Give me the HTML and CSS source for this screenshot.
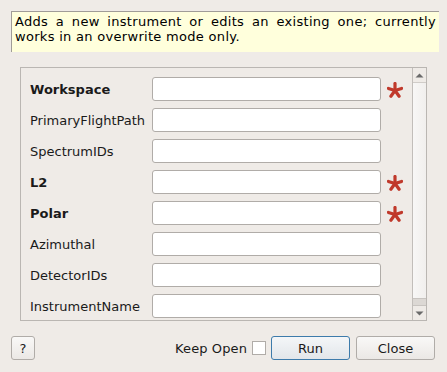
FILE: index.html
```html
<!DOCTYPE html>
<html>
<head>
<meta charset="utf-8">
<link rel="stylesheet" href="styles.css">
</head>
<body>
<div class="tip">Adds a new instrument or edits an existing one; currently works in an overwrite mode only.</div>
<div class="frame">
  <div class="rows">
    <div class="row"><span class="label bold">Workspace</span><div class="input"></div><svg class="star" viewBox="0 0 16 16"><g stroke="#c0392b" stroke-width="3.2" stroke-linecap="round"><line x1="8" y1="8.5" x2="8" y2="1.5"/><line x1="8" y1="8.5" x2="14.6" y2="6.4"/><line x1="8" y1="8.5" x2="12.1" y2="14.2"/><line x1="8" y1="8.5" x2="3.9" y2="14.2"/><line x1="8" y1="8.5" x2="1.4" y2="6.4"/></g></svg></div>
    <div class="row"><span class="label">PrimaryFlightPath</span><div class="input"></div></div>
    <div class="row"><span class="label">SpectrumIDs</span><div class="input"></div></div>
    <div class="row"><span class="label bold">L2</span><div class="input"></div><svg class="star" viewBox="0 0 16 16"><g stroke="#c0392b" stroke-width="3.2" stroke-linecap="round"><line x1="8" y1="8.5" x2="8" y2="1.5"/><line x1="8" y1="8.5" x2="14.6" y2="6.4"/><line x1="8" y1="8.5" x2="12.1" y2="14.2"/><line x1="8" y1="8.5" x2="3.9" y2="14.2"/><line x1="8" y1="8.5" x2="1.4" y2="6.4"/></g></svg></div>
    <div class="row"><span class="label bold">Polar</span><div class="input"></div><svg class="star" viewBox="0 0 16 16"><g stroke="#c0392b" stroke-width="3.2" stroke-linecap="round"><line x1="8" y1="8.5" x2="8" y2="1.5"/><line x1="8" y1="8.5" x2="14.6" y2="6.4"/><line x1="8" y1="8.5" x2="12.1" y2="14.2"/><line x1="8" y1="8.5" x2="3.9" y2="14.2"/><line x1="8" y1="8.5" x2="1.4" y2="6.4"/></g></svg></div>
    <div class="row"><span class="label">Azimuthal</span><div class="input"></div></div>
    <div class="row"><span class="label">DetectorIDs</span><div class="input"></div></div>
    <div class="row"><span class="label">InstrumentName</span><div class="input"></div></div>
  </div>
  <div class="scrollbar">
    <div class="sb-btn"><svg width="9" height="5" viewBox="0 0 9 5"><polygon points="4.5,0.5 8.5,4.5 0.5,4.5" fill="#6a6a6a"/></svg></div>
    <div class="sb-handle"></div>
    <div class="sb-groove"></div>
    <div class="sb-btn"><svg width="9" height="5" viewBox="0 0 9 5"><polygon points="0.5,0.5 8.5,0.5 4.5,4.5" fill="#6a6a6a"/></svg></div>
  </div>
</div>
<div class="footer">
  <div class="btn help">?</div>
  <div class="spacer"></div>
  <span class="keep">Keep Open</span>
  <div class="check"></div>
  <div class="btn run">Run</div>
  <div class="btn close">Close</div>
</div>
</body>
</html>
```
FILE: styles.css
```css
html, body {
  margin: 0;
  padding: 0;
  background: #efebe7;
  font-family: "DejaVu Sans", sans-serif;
  font-size: 13px;
  color: #1a1a1a;
}
.tip {
  margin: 11px 0 0 11px;
  width: 421px;
  height: 38px;
  padding: 2px 3px 0 3px;
  border-left: 1px solid #a09c98;
  border-top: 1px solid #a09c98;
  background: #ffffdc;
  color: #000;
  line-height: 15px;
  letter-spacing: 0.3px;
  text-align: justify;
  text-align-last: left;
  box-sizing: content-box;
}
.frame {
  margin: 15px 0 0 20px;
  width: 405px;
  height: 252px;
  border: 1px solid #bab6b2;
  display: flex;
  overflow: hidden;
}
.rows {
  flex: 1;
  padding: 9px 0 0 9px;
  display: flex;
  flex-direction: column;
  gap: 7px;
}
.row {
  display: flex;
  align-items: center;
  height: 24px;
}
.label {
  width: 122px;
  flex: none;
  white-space: nowrap;
}
.bold { font-weight: bold; }
.input {
  width: 227px;
  height: 22px;
  border: 1px solid #b0aca8;
  border-radius: 3px;
  background: #fff;
  flex: none;
}
.star {
  width: 16px;
  height: 16px;
  margin-left: 6px;
  margin-top: 1px;
}
.scrollbar {
  width: 13px;
  border-left: 1px solid #c2beba;
  display: flex;
  flex-direction: column;
  background: #efebe7;
}
.sb-btn {
  height: 14px;
  display: flex;
  align-items: center;
  justify-content: center;
  flex: none;
}
.sb-handle {
  flex: 1;
  background: linear-gradient(to right, #f8f7f6, #f1efed);
  border-top: 1px solid #d0ccc8;
}
.sb-groove {
  height: 6px;
  background: #dcd8d4;
  border-top: 1px solid #c8c4c0;
  border-bottom: 1px solid #c8c4c0;
}
.footer {
  display: flex;
  align-items: center;
  margin: 15px 0 0 11px;
  width: 424px;
  height: 24px;
}
.btn {
  height: 22px;
  border: 1px solid #b0aca8;
  border-radius: 3px;
  background: linear-gradient(#f9f8f7, #ebe8e5);
  display: flex;
  align-items: center;
  justify-content: center;
  flex: none;
  box-sizing: content-box;
}
.help { width: 22px; }
.spacer { flex: 1; }
.keep { margin-right: 5px; letter-spacing: 0.1px; }
.check {
  width: 12px;
  height: 12px;
  border: 1px solid #b0aca8;
  background: #fff;
  margin-right: 5px;
  flex: none;
}
.run {
  width: 77px;
  border-color: #3d7bab;
  background: linear-gradient(#f4f6f8, #e2e6ea);
  margin-right: 6px;
}
.close { width: 77px; }
```
